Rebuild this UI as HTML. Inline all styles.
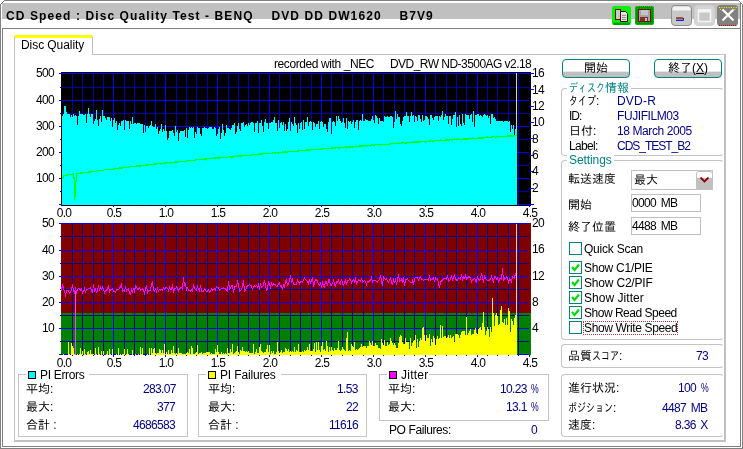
<!DOCTYPE html>
<html lang="ja"><head><meta charset="utf-8"><title>CD Speed : Disc Quality Test</title>
<style>
html,body{margin:0;padding:0;background:#fff;}
body{width:743px;height:449px;overflow:hidden;}
#win{position:relative;width:743px;height:449px;overflow:hidden;background:#fff;font-family:"Liberation Sans","IPAGothic","Noto Sans CJK JP",sans-serif;font-size:12px;line-height:14px;color:#000;}
.abs{position:absolute;}
.t{position:absolute;white-space:nowrap;line-height:14px;height:14px;will-change:transform;}
.b{position:absolute;box-sizing:border-box;}
.grp{position:absolute;box-sizing:border-box;border:1px solid #c4c4c4;}
.grp.r{border-radius:4px;border-right-color:transparent;}
.btn{position:absolute;box-sizing:border-box;border:1px solid #008080;border-radius:4px;background:linear-gradient(#fff 0,#fff 11px,#e8e8e8 11px,#e8e8e8 12px,#c0c0c0 12px);}
.edit{position:absolute;box-sizing:border-box;border:1px solid #c0c0c0;background:#fff;}
.cb{position:absolute;box-sizing:border-box;width:13px;height:13px;border:1px solid #008080;background:#fff;}
.k{display:inline-block;vertical-align:baseline;height:12px;}
.k>span{display:inline-block;transform-origin:0 50%;white-space:nowrap;letter-spacing:0;}

</style></head><body>
<div id="win">
<!-- window frame -->
<div class="b" style="left:0;top:0;width:743px;height:449px;border:1px solid #808080;"></div>
<div class="b" style="left:2px;top:3px;width:739px;height:16px;background:#c0c0c0;"></div>
<div class="b" style="left:2px;top:28px;width:739px;height:419px;border:1px solid #808080;"></div>
<svg class="abs" style="left:0;top:0" width="743" height="449" viewBox="0 0 743 449">
<path d="M0,0H5L0,5Z M743,0H738L743,5Z" fill="#fff"/>
<path d="M0,5L5,0 M738,0L743,5" stroke="#808080" stroke-width="1" fill="none"/>
</svg>
<div class="b" style="left:740px;top:3px;width:1px;height:26px;background:#808080;"></div>
<!-- tab pane -->
<div class="b" style="left:14px;top:54px;width:712px;height:388px;border:1px solid #c0c0c0;border-right-width:2px;border-bottom-width:2px;"></div>
<div class="b" style="left:14px;top:35px;width:79px;height:20px;background:#fff;border:1px solid #c0c0c0;border-bottom:none;border-top:3px solid #ffff00;border-radius:2px 2px 0 0;"></div>
<!-- title icons -->
<svg class="abs" style="left:606px;top:0" width="137" height="28" viewBox="606 0 137 28">
<rect x="612" y="6" width="19" height="19" rx="2.5" fill="#00f400"/>
<path d="M613,22.5h17v1a1.5,1.5 0 0 1 -1.5,1.5h-14a1.5,1.5 0 0 1 -1.5,-1.5z" fill="#00a000"/>
<rect x="615.5" y="9.5" width="5" height="10" fill="#c8c8c8" stroke="#800000"/>
<path d="M620.5,11.5h5l2,2v8h-7z" fill="#e4e4e4" stroke="#400000"/>
<path d="M622,15.5h4M622,17.5h4M622,19.5h4" stroke="#909090"/>
<rect x="635" y="6" width="19" height="19" rx="2.5" fill="#009000"/>
<rect x="635.5" y="6.5" width="18" height="18" rx="2.5" fill="none" stroke="#00e000" stroke-dasharray="1 1"/>
<path d="M637,8.5h15M637,22.5h15" stroke="#00c000" stroke-dasharray="1 2"/>
<rect x="638.5" y="9.5" width="12" height="12" fill="#a4a4a4" stroke="#701010"/>
<rect x="641" y="10" width="7" height="5" fill="#c4c4c4"/>
<rect x="640" y="17" width="8" height="4" fill="#803030"/>
<rect x="645" y="18" width="2" height="3" fill="#c0c0c0"/>
<rect x="671.5" y="5.5" width="20" height="20" rx="3.5" fill="#c8c8c8" stroke="#909090"/>
<path d="M672.5,10.5v-2a2,2 0 0 1 2,-2h14a2,2 0 0 1 2,2v2z" fill="#f4f4f4"/>
<rect x="676" y="17.5" width="7" height="3" fill="#909090"/><path d="M676,18h7" stroke="#900000"/><path d="M676,20.5h7.5v-2.5" stroke="#2020c0" fill="none"/>
<rect x="694.5" y="5.5" width="20" height="20" rx="3.5" fill="#d4d4d4" stroke="#d0d0d0"/>
<rect x="698.5" y="10" width="12" height="11.5" fill="#c8c8c8" stroke="#f4f4f4" stroke-width="1.6"/>
<rect x="698" y="9.5" width="13" height="3" fill="#f4f4f4"/>
<rect x="717" y="5" width="21" height="21" rx="3.5" fill="#808080"/>
<path d="M723.2,10.2L733.2,20.7M733.2,10.2L723.2,20.7" stroke="#900000" stroke-width="1"/>
<path d="M722.5,9.5L733.5,20.5M733.5,9.5L722.5,20.5" stroke="#fff" stroke-width="2.2"/>
<path d="M719,7.5h18M720,9.5h4M732,9.5h4" stroke="#ffee00" stroke-dasharray="1 1.4"/>
<path d="M719,25.5h17" stroke="#c00000" stroke-dasharray="1 1"/>
</svg>
<!-- buttons -->
<div class="btn" style="left:562px;top:59px;width:68px;height:19px;"></div>
<div class="btn" style="left:654px;top:59px;width:68px;height:19px;"></div>
<!-- groups right -->
<div class="grp r" style="left:561px;top:88px;width:163px;height:68px;"></div>
<div class="grp r" style="left:561px;top:160px;width:163px;height:180px;"></div>
<div class="grp r" style="left:561px;top:344px;width:163px;height:24px;"></div>
<div class="grp r" style="left:561px;top:374px;width:163px;height:63px;"></div>
<!-- combobox + edits -->
<div class="edit" style="left:631px;top:170px;width:82px;height:20px;"></div>
<div class="b" style="left:696px;top:171px;width:17px;height:18px;border:1px solid #c0c0c0;border-radius:3px 3px 0 0;background:linear-gradient(#fff 0,#fff 6px,#c0c0c0 6px);"></div>
<svg class="abs" style="left:696px;top:171px" width="17" height="18" viewBox="0 0 17 18"><path d="M4.5,6.5L8.5,10.5L12.5,6.5" stroke="#900000" stroke-width="1.8" fill="none"/></svg>
<div class="edit" style="left:631px;top:194px;width:70px;height:18px;"></div>
<div class="edit" style="left:631px;top:217px;width:70px;height:18px;"></div>
<!-- checkboxes -->
<div class="cb" style="left:569px;top:242px;"></div>
<div class="cb" style="left:569px;top:261px;"></div>
<div class="cb" style="left:569px;top:276px;"></div>
<div class="cb" style="left:569px;top:291px;"></div>
<div class="cb" style="left:569px;top:306px;"></div>
<div class="cb" style="left:569px;top:321px;"></div>
<svg class="abs" style="left:569px;top:261px" width="13" height="60" viewBox="0 0 13 60"><g stroke="#00dc00" stroke-width="2.2" fill="none"><path id="ck" d="M3,6L5.5,9L10,3.5"/><path d="M3,21L5.5,24L10,18.5"/><path d="M3,36L5.5,39L10,33.5"/><path d="M3,51L5.5,54L10,48.5"/></g></svg>
<div class="b" style="left:583px;top:321px;width:95px;height:14px;border:1px dotted #a04040;"></div>
<!-- bottom groups -->
<div class="grp" style="left:18px;top:374px;width:170px;height:63px;"></div>
<div class="grp" style="left:198px;top:374px;width:169px;height:63px;"></div>
<div class="grp" style="left:379px;top:374px;width:170px;height:47px;"></div>
<div class="b" style="left:28px;top:371px;width:8px;height:8px;background:#00ffff;border:1px solid #000;z-index:3;"></div>
<div class="b" style="left:208px;top:371px;width:8px;height:8px;background:#ffff00;border:1px solid #000;z-index:3;"></div>
<div class="b" style="left:389px;top:371px;width:8px;height:8px;background:#ff00ff;border:1px solid #000;z-index:3;"></div>

<svg class="abs" style="left:0;top:0" width="743" height="449" viewBox="0 0 743 449" shape-rendering="crispEdges"><rect x="61" y="72" width="470" height="134" fill="#000"/><rect x="72" y="73" width="1" height="131" fill="#0000a8"/><rect x="72" y="205" width="1" height="1" fill="#0000a8"/><rect x="82" y="73" width="1" height="131" fill="#0000a8"/><rect x="82" y="205" width="1" height="1" fill="#0000a8"/><rect x="93" y="73" width="1" height="131" fill="#0000a8"/><rect x="93" y="205" width="1" height="1" fill="#0000a8"/><rect x="103" y="73" width="1" height="131" fill="#0000a8"/><rect x="103" y="205" width="1" height="1" fill="#0000a8"/><rect x="113" y="73" width="1" height="131" fill="#0000ff"/><rect x="113" y="205" width="1" height="2" fill="#0000ff"/><rect x="124" y="73" width="1" height="131" fill="#0000a8"/><rect x="124" y="205" width="1" height="1" fill="#0000a8"/><rect x="134" y="73" width="1" height="131" fill="#0000a8"/><rect x="134" y="205" width="1" height="1" fill="#0000a8"/><rect x="145" y="73" width="1" height="131" fill="#0000a8"/><rect x="145" y="205" width="1" height="1" fill="#0000a8"/><rect x="155" y="73" width="1" height="131" fill="#0000a8"/><rect x="155" y="205" width="1" height="1" fill="#0000a8"/><rect x="165" y="73" width="1" height="131" fill="#0000ff"/><rect x="165" y="205" width="1" height="2" fill="#0000ff"/><rect x="176" y="73" width="1" height="131" fill="#0000a8"/><rect x="176" y="205" width="1" height="1" fill="#0000a8"/><rect x="186" y="73" width="1" height="131" fill="#0000a8"/><rect x="186" y="205" width="1" height="1" fill="#0000a8"/><rect x="196" y="73" width="1" height="131" fill="#0000a8"/><rect x="196" y="205" width="1" height="1" fill="#0000a8"/><rect x="207" y="73" width="1" height="131" fill="#0000a8"/><rect x="207" y="205" width="1" height="1" fill="#0000a8"/><rect x="217" y="73" width="1" height="131" fill="#0000ff"/><rect x="217" y="205" width="1" height="2" fill="#0000ff"/><rect x="228" y="73" width="1" height="131" fill="#0000a8"/><rect x="228" y="205" width="1" height="1" fill="#0000a8"/><rect x="238" y="73" width="1" height="131" fill="#0000a8"/><rect x="238" y="205" width="1" height="1" fill="#0000a8"/><rect x="248" y="73" width="1" height="131" fill="#0000a8"/><rect x="248" y="205" width="1" height="1" fill="#0000a8"/><rect x="259" y="73" width="1" height="131" fill="#0000a8"/><rect x="259" y="205" width="1" height="1" fill="#0000a8"/><rect x="269" y="73" width="1" height="131" fill="#0000ff"/><rect x="269" y="205" width="1" height="2" fill="#0000ff"/><rect x="279" y="73" width="1" height="131" fill="#0000a8"/><rect x="279" y="205" width="1" height="1" fill="#0000a8"/><rect x="290" y="73" width="1" height="131" fill="#0000a8"/><rect x="290" y="205" width="1" height="1" fill="#0000a8"/><rect x="300" y="73" width="1" height="131" fill="#0000a8"/><rect x="300" y="205" width="1" height="1" fill="#0000a8"/><rect x="311" y="73" width="1" height="131" fill="#0000a8"/><rect x="311" y="205" width="1" height="1" fill="#0000a8"/><rect x="321" y="73" width="1" height="131" fill="#0000ff"/><rect x="321" y="205" width="1" height="2" fill="#0000ff"/><rect x="331" y="73" width="1" height="131" fill="#0000a8"/><rect x="331" y="205" width="1" height="1" fill="#0000a8"/><rect x="342" y="73" width="1" height="131" fill="#0000a8"/><rect x="342" y="205" width="1" height="1" fill="#0000a8"/><rect x="352" y="73" width="1" height="131" fill="#0000a8"/><rect x="352" y="205" width="1" height="1" fill="#0000a8"/><rect x="363" y="73" width="1" height="131" fill="#0000a8"/><rect x="363" y="205" width="1" height="1" fill="#0000a8"/><rect x="373" y="73" width="1" height="131" fill="#0000ff"/><rect x="373" y="205" width="1" height="2" fill="#0000ff"/><rect x="383" y="73" width="1" height="131" fill="#0000a8"/><rect x="383" y="205" width="1" height="1" fill="#0000a8"/><rect x="394" y="73" width="1" height="131" fill="#0000a8"/><rect x="394" y="205" width="1" height="1" fill="#0000a8"/><rect x="404" y="73" width="1" height="131" fill="#0000a8"/><rect x="404" y="205" width="1" height="1" fill="#0000a8"/><rect x="414" y="73" width="1" height="131" fill="#0000a8"/><rect x="414" y="205" width="1" height="1" fill="#0000a8"/><rect x="425" y="73" width="1" height="131" fill="#0000ff"/><rect x="425" y="205" width="1" height="2" fill="#0000ff"/><rect x="435" y="73" width="1" height="131" fill="#0000a8"/><rect x="435" y="205" width="1" height="1" fill="#0000a8"/><rect x="446" y="73" width="1" height="131" fill="#0000a8"/><rect x="446" y="205" width="1" height="1" fill="#0000a8"/><rect x="456" y="73" width="1" height="131" fill="#0000a8"/><rect x="456" y="205" width="1" height="1" fill="#0000a8"/><rect x="466" y="73" width="1" height="131" fill="#0000a8"/><rect x="466" y="205" width="1" height="1" fill="#0000a8"/><rect x="477" y="73" width="1" height="131" fill="#0000ff"/><rect x="477" y="205" width="1" height="2" fill="#0000ff"/><rect x="487" y="73" width="1" height="131" fill="#0000a8"/><rect x="487" y="205" width="1" height="1" fill="#0000a8"/><rect x="497" y="73" width="1" height="131" fill="#0000a8"/><rect x="497" y="205" width="1" height="1" fill="#0000a8"/><rect x="508" y="73" width="1" height="131" fill="#0000a8"/><rect x="508" y="205" width="1" height="1" fill="#0000a8"/><rect x="518" y="73" width="1" height="131" fill="#0000a8"/><rect x="518" y="205" width="1" height="1" fill="#0000a8"/><rect x="529" y="205" width="1" height="2" fill="#0000ff"/><rect x="59" y="73" width="470" height="1" fill="#0000ff"/><rect x="60" y="87" width="469" height="1" fill="#0000a8"/><rect x="59" y="100" width="470" height="1" fill="#0000ff"/><rect x="60" y="113" width="469" height="1" fill="#0000a8"/><rect x="59" y="126" width="470" height="1" fill="#0000ff"/><rect x="60" y="139" width="469" height="1" fill="#0000a8"/><rect x="59" y="152" width="470" height="1" fill="#0000ff"/><rect x="60" y="165" width="469" height="1" fill="#0000a8"/><rect x="59" y="178" width="470" height="1" fill="#0000ff"/><rect x="60" y="191" width="469" height="1" fill="#0000a8"/><rect x="59" y="204" width="470" height="1" fill="#0000ff"/><rect x="529" y="204" width="5" height="1" fill="#0000ff"/><rect x="529" y="196" width="2" height="1" fill="#0000a8"/><rect x="529" y="188" width="5" height="1" fill="#0000ff"/><rect x="529" y="179" width="2" height="1" fill="#0000a8"/><rect x="529" y="171" width="5" height="1" fill="#0000ff"/><rect x="529" y="163" width="2" height="1" fill="#0000a8"/><rect x="529" y="155" width="5" height="1" fill="#0000ff"/><rect x="529" y="147" width="2" height="1" fill="#0000a8"/><rect x="529" y="138" width="5" height="1" fill="#0000ff"/><rect x="529" y="130" width="2" height="1" fill="#0000a8"/><rect x="529" y="122" width="5" height="1" fill="#0000ff"/><rect x="529" y="114" width="2" height="1" fill="#0000a8"/><rect x="529" y="106" width="5" height="1" fill="#0000ff"/><rect x="529" y="98" width="2" height="1" fill="#0000a8"/><rect x="529" y="89" width="5" height="1" fill="#0000ff"/><rect x="529" y="81" width="2" height="1" fill="#0000a8"/><rect x="529" y="73" width="5" height="1" fill="#0000ff"/><rect x="516" y="73" width="1" height="131" fill="#d0d0d0"/><path d="M62,205V116H63V114H64V106H65V106H66V112H67V114H68V114H69V114H70V117H71V115H72V117H73V114H74V116H75V115H76V116H77V125H78V116H79V111H80V114H81V114H82V114H83V115H84V115H85V114H86V123H87V114H88V108H89V114H90V117H91V114H92V114H93V124H94V121H95V119H96V110H97V120H98V126H99V119H100V116H101V122H102V110H103V116H104V116H105V118H106V120H107V117H108V117H109V117H110V121H111V118H112V127H113V120H114V118H115V123H116V121H117V130H118V125H119V123H120V126H121V121H122V121H123V120H124V130H125V120H126V121H127V121H128V121H129V129H130V121H131V124H132V117H133V124H134V123H135V123H136V124H137V123H138V123H139V123H140V124H141V124H142V124H143V133H144V125H145V132H146V126H147V126H148V128H149V126H150V125H151V121H152V126H153V127H154V127H155V124H156V129H157V127H158V134H159V131H160V129H161V124H162V132H163V129H164V131H165V125H166V131H167V140H168V138H169V131H170V131H171V131H172V130H173V133H174V136H175V126H176V132H177V130H178V141H179V133H180V131H181V131H182V131H183V131H184V130H185V137H186V128H187V138H188V130H189V127H190V128H191V127H192V128H193V127H194V138H195V132H196V134H197V127H198V128H199V128H200V134H201V136H202V128H203V128H204V127H205V128H206V128H207V129H208V128H209V127H210V127H211V127H212V129H213V129H214V127H215V128H216V136H217V134H218V129H219V127H220V139H221V133H222V124H223V130H224V136H225V133H226V125H227V128H228V128H229V129H230V130H231V128H232V125H233V125H234V123H235V134H236V132H237V126H238V123H239V129H240V131H241V123H242V123H243V122H244V127H245V125H246V124H247V126H248V123H249V125H250V123H251V122H252V122H253V123H254V132H255V123H256V123H257V121H258V133H259V123H260V123H261V120H262V126H263V132H264V122H265V119H266V123H267V123H268V129H269V123H270V123H271V122H272V122H273V120H274V117H275V123H276V123H277V131H278V120H279V128H280V123H281V122H282V125H283V122H284V131H285V124H286V131H287V129H288V122H289V118H290V131H291V122H292V124H293V126H294V117H295V123H296V125H297V133H298V123H299V129H300V123H301V122H302V130H303V120H304V129H305V122H306V122H307V117H308V126H309V122H310V121H311V122H312V130H313V122H314V123H315V127H316V124H317V124H318V121H319V129H320V122H321V121H322V122H323V127H324V124H325V124H326V129H327V132H328V122H329V118H330V118H331V134H332V122H333V121H334V122H335V126H336V116H337V121H338V116H339V119H340V121H341V123H342V122H343V118H344V123H345V128H346V118H347V129H348V121H349V122H350V121H351V124H352V122H353V120H354V128H355V122H356V120H357V120H358V130H359V121H360V120H361V121H362V114H363V121H364V121H365V119H366V120H367V120H368V121H369V121H370V121H371V119H372V116H373V120H374V123H375V115H376V116H377V118H378V124H379V118H380V121H381V121H382V121H383V122H384V116H385V117H386V117H387V116H388V117H389V117H390V116H391V116H392V117H393V128H394V122H395V111H396V119H397V114H398V117H399V117H400V124H401V126H402V121H403V117H404V116H405V116H406V112H407V116H408V116H409V122H410V116H411V112H412V116H413V115H414V122H415V116H416V117H417V121H418V115H419V115H420V119H421V122H422V115H423V121H424V120H425V116H426V116H427V117H428V119H429V125H430V115H431V115H432V118H433V120H434V117H435V116H436V116H437V116H438V121H439V116H440V117H441V115H442V111H443V120H444V117H445V114H446V116H447V116H448V124H449V116H450V116H451V125H452V119H453V115H454V115H455V112H456V127H457V117H458V126H459V115H460V124H461V126H462V114H463V123H464V125H465V114H466V115H467V115H468V115H469V119H470V115H471V114H472V122H473V111H474V127H475V115H476V115H477V114H478V114H479V116H480V115H481V116H482V117H483V115H484V114H485V115H486V116H487V115H488V118H489V116H490V124H491V114H492V114H493V118H494V117H495V119H496V121H497V121H498V121H499V121H500V121H501V121H502V121H503V122H504V121H505V121H506V121H507V121H508V122H509V121H510V132H511V125H512V129H513V125H514V135H515V129H516V130H517V205Z" fill="#00ffff"/><polyline points="62.5,179.0 63.5,175.6 64.5,175.5 65.5,175.2 66.5,175.7 67.5,175.0 68.5,174.8 69.5,174.7 70.5,174.6 71.5,174.7 72.5,174.3 73.5,174.0 74.5,182 74.5,200 75.5,192 75.5,182 76.5,181 76.5,173.5 77.5,173.6 78.5,173.6 79.5,173.4 80.5,173.1 81.5,173.0 82.5,173.3 83.5,172.8 84.5,172.8 85.5,172.4 86.5,172.4 87.5,172.7 88.5,171.8 89.5,172.2 90.5,171.9 91.5,171.7 92.5,171.4 93.5,171.7 94.5,171.2 95.5,171.3 96.5,171.3 97.5,170.8 98.5,170.7 99.5,170.5 100.5,170.3 101.5,170.2 102.5,170.3 103.5,170.3 104.5,169.8 105.5,169.4 106.5,169.7 107.5,169.8 108.5,169.8 109.5,169.6 110.5,169.5 111.5,169.2 112.5,169.3 113.5,169.0 114.5,168.5 115.5,168.7 116.5,168.4 117.5,168.3 118.5,168.3 119.5,168.0 120.5,168.0 121.5,168.2 122.5,167.9 123.5,167.7 124.5,167.3 125.5,167.6 126.5,167.3 127.5,167.3 128.5,167.2 129.5,166.8 130.5,166.9 131.5,166.6 132.5,166.7 133.5,166.6 134.5,166.4 135.5,166.5 136.5,166.1 137.5,165.8 138.5,165.9 139.5,165.9 140.5,165.9 141.5,165.6 142.5,165.6 143.5,165.3 144.5,165.6 145.5,165.1 146.5,165.1 147.5,164.9 148.5,164.8 149.5,164.8 150.5,164.5 151.5,164.5 152.5,164.6 153.5,164.2 154.5,163.9 155.5,164.1 156.5,163.9 157.5,163.7 158.5,163.9 159.5,163.8 160.5,164.1 161.5,163.7 162.5,163.4 163.5,163.3 164.5,162.6 165.5,163.2 166.5,163.1 167.5,162.8 168.5,162.7 169.5,162.7 170.5,163.0 171.5,162.6 172.5,162.5 173.5,162.2 174.5,162.3 175.5,162.1 176.5,161.9 177.5,162.2 178.5,161.7 179.5,161.6 180.5,161.4 181.5,161.4 182.5,161.6 183.5,161.2 184.5,161.3 185.5,161.2 186.5,160.8 187.5,160.5 188.5,161.2 189.5,160.6 190.5,160.5 191.5,160.2 192.5,160.5 193.5,160.4 194.5,160.2 195.5,159.9 196.5,159.6 197.5,159.5 198.5,159.5 199.5,159.4 200.5,159.6 201.5,159.6 202.5,159.2 203.5,159.3 204.5,159.0 205.5,159.0 206.5,159.1 207.5,158.8 208.5,158.7 209.5,158.7 210.5,158.7 211.5,158.3 212.5,158.4 213.5,157.7 214.5,158.4 215.5,157.9 216.5,157.7 217.5,158.0 218.5,158.0 219.5,158.0 220.5,157.8 221.5,157.5 222.5,157.6 223.5,157.5 224.5,157.3 225.5,157.2 226.5,157.3 227.5,157.3 228.5,156.8 229.5,156.8 230.5,156.9 231.5,156.9 232.5,156.9 233.5,156.2 234.5,156.6 235.5,156.2 236.5,155.8 237.5,156.3 238.5,156.0 239.5,155.9 240.5,155.9 241.5,155.9 242.5,155.5 243.5,155.6 244.5,155.2 245.5,155.6 246.5,155.4 247.5,155.2 248.5,155.2 249.5,155.2 250.5,155.2 251.5,155.0 252.5,154.8 253.5,154.5 254.5,154.7 255.5,154.7 256.5,154.7 257.5,154.3 258.5,154.6 259.5,154.1 260.5,154.0 261.5,154.0 262.5,154.1 263.5,153.8 264.5,153.5 265.5,153.4 266.5,153.8 267.5,153.5 268.5,153.6 269.5,153.2 270.5,153.4 271.5,153.2 272.5,153.1 273.5,152.8 274.5,152.7 275.5,153.0 276.5,152.2 277.5,152.6 278.5,152.9 279.5,152.6 280.5,152.3 281.5,152.2 282.5,152.0 283.5,152.5 284.5,152.0 285.5,152.0 286.5,152.2 287.5,152.0 288.5,151.9 289.5,151.6 290.5,151.6 291.5,151.4 292.5,151.5 293.5,151.2 294.5,151.3 295.5,151.3 296.5,151.3 297.5,150.9 298.5,150.9 299.5,150.8 300.5,150.6 301.5,150.8 302.5,150.7 303.5,150.4 304.5,150.5 305.5,150.1 306.5,150.1 307.5,149.9 308.5,150.0 309.5,150.2 310.5,150.0 311.5,149.8 312.5,149.9 313.5,149.7 314.5,149.7 315.5,149.3 316.5,149.5 317.5,149.2 318.5,149.4 319.5,149.3 320.5,149.2 321.5,148.9 322.5,149.4 323.5,148.8 324.5,148.8 325.5,148.7 326.5,148.6 327.5,148.4 328.5,148.6 329.5,148.7 330.5,148.3 331.5,147.9 332.5,148.0 333.5,148.2 334.5,147.8 335.5,147.9 336.5,147.8 337.5,147.7 338.5,147.9 339.5,147.9 340.5,147.3 341.5,147.2 342.5,147.8 343.5,147.5 344.5,147.4 345.5,147.1 346.5,147.2 347.5,146.8 348.5,147.5 349.5,147.0 350.5,147.0 351.5,146.8 352.5,147.0 353.5,146.7 354.5,146.6 355.5,146.3 356.5,146.4 357.5,146.4 358.5,146.5 359.5,146.1 360.5,145.9 361.5,145.9 362.5,145.8 363.5,146.2 364.5,145.4 365.5,145.7 366.5,145.9 367.5,145.7 368.5,145.4 369.5,145.4 370.5,145.1 371.5,145.1 372.5,144.8 373.5,145.2 374.5,145.0 375.5,144.9 376.5,144.8 377.5,144.7 378.5,144.7 379.5,144.7 380.5,145.0 381.5,144.5 382.5,144.5 383.5,144.5 384.5,144.6 385.5,144.4 386.5,144.5 387.5,144.2 388.5,144.1 389.5,144.1 390.5,144.0 391.5,143.9 392.5,143.7 393.5,143.4 394.5,143.8 395.5,143.5 396.5,143.5 397.5,143.7 398.5,143.1 399.5,143.5 400.5,143.3 401.5,142.8 402.5,143.1 403.5,142.8 404.5,143.2 405.5,142.9 406.5,143.1 407.5,142.7 408.5,142.8 409.5,142.6 410.5,142.2 411.5,142.6 412.5,142.2 413.5,142.1 414.5,142.4 415.5,141.9 416.5,141.9 417.5,142.1 418.5,141.9 419.5,141.7 420.5,142.1 421.5,141.8 422.5,141.8 423.5,141.9 424.5,141.6 425.5,142.0 426.5,141.2 427.5,141.6 428.5,141.5 429.5,141.0 430.5,141.3 431.5,140.7 432.5,141.3 433.5,141.0 434.5,140.9 435.5,140.8 436.5,140.7 437.5,140.8 438.5,140.7 439.5,140.5 440.5,139.9 441.5,140.5 442.5,140.5 443.5,140.5 444.5,140.3 445.5,140.0 446.5,140.1 447.5,139.9 448.5,140.3 449.5,140.0 450.5,139.7 451.5,139.5 452.5,139.9 453.5,139.7 454.5,139.0 455.5,139.2 456.5,139.6 457.5,139.0 458.5,139.2 459.5,139.3 460.5,139.2 461.5,139.4 462.5,139.3 463.5,138.9 464.5,139.1 465.5,138.9 466.5,138.9 467.5,138.9 468.5,138.7 469.5,138.7 470.5,138.7 471.5,138.4 472.5,138.5 473.5,138.1 474.5,138.2 475.5,138.2 476.5,138.2 477.5,138.4 478.5,138.1 479.5,137.9 480.5,137.9 481.5,137.9 482.5,137.9 483.5,137.8 484.5,137.6 485.5,137.7 486.5,137.3 487.5,137.1 488.5,137.5 489.5,137.2 490.5,137.2 491.5,136.9 492.5,137.0 493.5,136.9 494.5,136.8 495.5,137.2 496.5,136.7 497.5,137.0 498.5,136.7 499.5,136.8 500.5,136.3 501.5,136.5 502.5,136.5 503.5,136.4 504.5,136.4 505.5,136.4 506.5,136.3 507.5,136.1 508.5,135.9 509.5,136.0 510.5,135.9 511.5,136.0 512.5,136.3 513.5,136.0 514.5,135.7 515.5,135.7 516.5,135.2" fill="none" stroke="#00ff00" stroke-width="1.2" shape-rendering="crispEdges"/><rect x="61" y="223" width="470" height="90" fill="#800000"/><rect x="61" y="313" width="470" height="42" fill="#008000"/><rect x="72" y="223" width="1" height="131" fill="#000090"/><rect x="72" y="355" width="1" height="1" fill="#000090"/><rect x="82" y="223" width="1" height="131" fill="#000090"/><rect x="82" y="355" width="1" height="1" fill="#000090"/><rect x="93" y="223" width="1" height="131" fill="#000090"/><rect x="93" y="355" width="1" height="1" fill="#000090"/><rect x="103" y="223" width="1" height="131" fill="#000090"/><rect x="103" y="355" width="1" height="1" fill="#000090"/><rect x="113" y="223" width="1" height="131" fill="#0000ff"/><rect x="113" y="355" width="1" height="2" fill="#0000ff"/><rect x="124" y="223" width="1" height="131" fill="#000090"/><rect x="124" y="355" width="1" height="1" fill="#000090"/><rect x="134" y="223" width="1" height="131" fill="#000090"/><rect x="134" y="355" width="1" height="1" fill="#000090"/><rect x="145" y="223" width="1" height="131" fill="#000090"/><rect x="145" y="355" width="1" height="1" fill="#000090"/><rect x="155" y="223" width="1" height="131" fill="#000090"/><rect x="155" y="355" width="1" height="1" fill="#000090"/><rect x="165" y="223" width="1" height="131" fill="#0000ff"/><rect x="165" y="355" width="1" height="2" fill="#0000ff"/><rect x="176" y="223" width="1" height="131" fill="#000090"/><rect x="176" y="355" width="1" height="1" fill="#000090"/><rect x="186" y="223" width="1" height="131" fill="#000090"/><rect x="186" y="355" width="1" height="1" fill="#000090"/><rect x="196" y="223" width="1" height="131" fill="#000090"/><rect x="196" y="355" width="1" height="1" fill="#000090"/><rect x="207" y="223" width="1" height="131" fill="#000090"/><rect x="207" y="355" width="1" height="1" fill="#000090"/><rect x="217" y="223" width="1" height="131" fill="#0000ff"/><rect x="217" y="355" width="1" height="2" fill="#0000ff"/><rect x="228" y="223" width="1" height="131" fill="#000090"/><rect x="228" y="355" width="1" height="1" fill="#000090"/><rect x="238" y="223" width="1" height="131" fill="#000090"/><rect x="238" y="355" width="1" height="1" fill="#000090"/><rect x="248" y="223" width="1" height="131" fill="#000090"/><rect x="248" y="355" width="1" height="1" fill="#000090"/><rect x="259" y="223" width="1" height="131" fill="#000090"/><rect x="259" y="355" width="1" height="1" fill="#000090"/><rect x="269" y="223" width="1" height="131" fill="#0000ff"/><rect x="269" y="355" width="1" height="2" fill="#0000ff"/><rect x="279" y="223" width="1" height="131" fill="#000090"/><rect x="279" y="355" width="1" height="1" fill="#000090"/><rect x="290" y="223" width="1" height="131" fill="#000090"/><rect x="290" y="355" width="1" height="1" fill="#000090"/><rect x="300" y="223" width="1" height="131" fill="#000090"/><rect x="300" y="355" width="1" height="1" fill="#000090"/><rect x="311" y="223" width="1" height="131" fill="#000090"/><rect x="311" y="355" width="1" height="1" fill="#000090"/><rect x="321" y="223" width="1" height="131" fill="#0000ff"/><rect x="321" y="355" width="1" height="2" fill="#0000ff"/><rect x="331" y="223" width="1" height="131" fill="#000090"/><rect x="331" y="355" width="1" height="1" fill="#000090"/><rect x="342" y="223" width="1" height="131" fill="#000090"/><rect x="342" y="355" width="1" height="1" fill="#000090"/><rect x="352" y="223" width="1" height="131" fill="#000090"/><rect x="352" y="355" width="1" height="1" fill="#000090"/><rect x="363" y="223" width="1" height="131" fill="#000090"/><rect x="363" y="355" width="1" height="1" fill="#000090"/><rect x="373" y="223" width="1" height="131" fill="#0000ff"/><rect x="373" y="355" width="1" height="2" fill="#0000ff"/><rect x="383" y="223" width="1" height="131" fill="#000090"/><rect x="383" y="355" width="1" height="1" fill="#000090"/><rect x="394" y="223" width="1" height="131" fill="#000090"/><rect x="394" y="355" width="1" height="1" fill="#000090"/><rect x="404" y="223" width="1" height="131" fill="#000090"/><rect x="404" y="355" width="1" height="1" fill="#000090"/><rect x="414" y="223" width="1" height="131" fill="#000090"/><rect x="414" y="355" width="1" height="1" fill="#000090"/><rect x="425" y="223" width="1" height="131" fill="#0000ff"/><rect x="425" y="355" width="1" height="2" fill="#0000ff"/><rect x="435" y="223" width="1" height="131" fill="#000090"/><rect x="435" y="355" width="1" height="1" fill="#000090"/><rect x="446" y="223" width="1" height="131" fill="#000090"/><rect x="446" y="355" width="1" height="1" fill="#000090"/><rect x="456" y="223" width="1" height="131" fill="#000090"/><rect x="456" y="355" width="1" height="1" fill="#000090"/><rect x="466" y="223" width="1" height="131" fill="#000090"/><rect x="466" y="355" width="1" height="1" fill="#000090"/><rect x="477" y="223" width="1" height="131" fill="#0000ff"/><rect x="477" y="355" width="1" height="2" fill="#0000ff"/><rect x="487" y="223" width="1" height="131" fill="#000090"/><rect x="487" y="355" width="1" height="1" fill="#000090"/><rect x="497" y="223" width="1" height="131" fill="#000090"/><rect x="497" y="355" width="1" height="1" fill="#000090"/><rect x="508" y="223" width="1" height="131" fill="#000090"/><rect x="508" y="355" width="1" height="1" fill="#000090"/><rect x="518" y="223" width="1" height="131" fill="#000090"/><rect x="518" y="355" width="1" height="1" fill="#000090"/><rect x="529" y="355" width="1" height="2" fill="#0000ff"/><rect x="59" y="223" width="470" height="1" fill="#0000ff"/><rect x="60" y="236" width="469" height="1" fill="#000090"/><rect x="59" y="250" width="470" height="1" fill="#0000ff"/><rect x="60" y="263" width="469" height="1" fill="#000090"/><rect x="59" y="276" width="470" height="1" fill="#0000ff"/><rect x="60" y="289" width="469" height="1" fill="#000090"/><rect x="59" y="302" width="470" height="1" fill="#0000ff"/><rect x="60" y="315" width="469" height="1" fill="#000090"/><rect x="59" y="328" width="470" height="1" fill="#0000ff"/><rect x="60" y="341" width="469" height="1" fill="#000090"/><rect x="59" y="354" width="470" height="1" fill="#0000ff"/><rect x="516" y="224" width="1" height="130" fill="#d0d0d0"/><path d="M62,355V355H63V354H64V355H65V355H66V355H67V355H68V342H69V354H70V355H71V343H72V346H73V348H74V354H75V355H76V355H77V354H78V355H79V354H80V348H81V354H82V351H83V355H84V349H85V354H86V355H87V352H88V351H89V354H90V350H91V354H92V354H93V354H94V355H95V348H96V354H97V355H98V347H99V354H100V355H101V351H102V355H103V351H104V355H105V355H106V354H107V351H108V355H109V349H110V354H111V355H112V349H113V355H114V355H115V355H116V354H117V355H118V348H119V355H120V354H121V355H122V354H123V354H124V349H125V355H126V354H127V349H128V354H129V355H130V355H131V355H132V350H133V355H134V355H135V354H136V355H137V355H138V354H139V355H140V347H141V354H142V348H143V355H144V355H145V355H146V355H147V354H148V355H149V348H150V355H151V348H152V353H153V349H154V348H155V353H156V354H157V353H158V353H159V349H160V350H161V353H162V350H163V353H164V344H165V354H166V352H167V354H168V350H169V354H170V354H171V350H172V353H173V346H174V353H175V354H176V353H177V354H178V348H179V353H180V353H181V353H182V354H183V354H184V354H185V354H186V353H187V352H188V353H189V349H190V354H191V346H192V348H193V354H194V354H195V353H196V352H197V345H198V354H199V353H200V353H201V352H202V354H203V353H204V353H205V353H206V352H207V352H208V352H209V352H210V354H211V353H212V354H213V354H214V354H215V349H216V352H217V345H218V352H219V354H220V354H221V352H222V354H223V353H224V354H225V353H226V354H227V348H228V353H229V353H230V349H231V352H232V344H233V354H234V353H235V352H236V351H237V346H238V352H239V354H240V350H241V351H242V347H243V351H244V351H245V352H246V351H247V352H248V351H249V353H250V353H251V353H252V353H253V344H254V354H255V352H256V349H257V353H258V353H259V347H260V344H261V351H262V352H263V353H264V352H265V352H266V349H267V345H268V352H269V345H270V354H271V351H272V353H273V351H274V354H275V354H276V352H277V342H278V351H279V353H280V352H281V350H282V353H283V352H284V352H285V348H286V349H287V351H288V349H289V352H290V351H291V352H292V351H293V352H294V347H295V352H296V350H297V351H298V344H299V352H300V352H301V352H302V351H303V352H304V350H305V351H306V350H307V347H308V350H309V344H310V351H311V351H312V351H313V349H314V343H315V352H316V342H317V350H318V342H319V350H320V352H321V346H322V342H323V350H324V349H325V351H326V341H327V346H328V352H329V347H330V351H331V347H332V350H333V351H334V348H335V350H336V350H337V348H338V341H339V350H340V351H341V350H342V347H343V349H344V350H345V351H346V338H347V332H348V351H349V350H350V351H351V344H352V346H353V347H354V342H355V350H356V349H357V350H358V349H359V348H360V347H361V344H362V347H363V346H364V346H365V346H366V348H367V346H368V346H369V341H370V343H371V345H372V341H373V346H374V346H375V343H376V345H377V345H378V348H379V348H380V349H381V339H382V343H383V345H384V340H385V346H386V346H387V342H388V345H389V344H390V338H391V341H392V343H393V345H394V343H395V345H396V348H397V348H398V343H399V337H400V335H401V336H402V342H403V344H404V344H405V338H406V342H407V342H408V342H409V349H410V338H411V346H412V343H413V341H414V340H415V335H416V348H417V339H418V347H419V341H420V338H421V340H422V328H423V327H424V335H425V341H426V335H427V338H428V338H429V334H430V346H431V339H432V342H433V336H434V338H435V345H436V339H437V336H438V339H439V338H440V325H441V338H442V326H443V337H444V336H445V336H446V338H447V337H448V335H449V338H450V335H451V338H452V337H453V336H454V342H455V334H456V334H457V334H458V335H459V338H460V335H461V332H462V331H463V331H464V331H465V335H466V317H467V335H468V333H469V331H470V329H471V335H472V334H473V334H474V330H475V328H476V333H477V334H478V329H479V328H480V327H481V330H482V323H483V312H484V327H485V335H486V331H487V327H488V329H489V337H490V327H491V332H492V298H493V313H494V326H495V315H496V313H497V316H498V325H499V324H500V310H501V306H502V322H503V323H504V319H505V325H506V318H507V325H508V308H509V311H510V332H511V319H512V321H513V325H514V318H515V315H516V322H517V355Z" fill="#ffff00"/><path d="M61.5,291.3 L62.5,284.0 L63.5,287.9 L64.5,291.5 L65.5,294.9 L66.5,290.8 L67.5,290.7 L68.5,290.1 L69.5,293.5 L70.5,292.7 L71.5,288.7 L72.5,285.7 L73.5,290.7 L74.5,293.5 L75.5,287.0 L76.5,292.2 L77.5,289.5 L78.5,288.1 L79.5,288.5 L80.5,290.4 L81.5,289.0 L82.5,292.9 L83.5,291.4 L84.5,288.6 L85.5,293.1 L86.5,289.5 L87.5,289.9 L88.5,288.4 L89.5,288.5 L90.5,287.7 L91.5,290.4 L92.5,293.0 L93.5,284.3 L94.5,292.3 L95.5,289.8 L96.5,292.4 L97.5,291.1 L98.5,284.9 L99.5,291.4 L100.5,286.8 L101.5,289.2 L102.5,286.9 L103.5,289.9 L104.5,292.7 L105.5,290.9 L106.5,289.8 L107.5,289.2 L108.5,285.5 L109.5,291.7 L110.5,289.5 L111.5,289.1 L112.5,288.6 L113.5,291.4 L114.5,291.8 L115.5,292.2 L116.5,289.7 L117.5,289.9 L118.5,289.1 L119.5,288.6 L120.5,286.7 L121.5,284.5 L122.5,291.5 L123.5,290.7 L124.5,291.1 L125.5,287.4 L126.5,290.9 L127.5,289.7 L128.5,288.4 L129.5,293.1 L130.5,294.5 L131.5,289.3 L132.5,291.6 L133.5,289.0 L134.5,291.6 L135.5,285.7 L136.5,286.4 L137.5,289.0 L138.5,289.0 L139.5,288.0 L140.5,290.4 L141.5,289.2 L142.5,288.7 L143.5,290.5 L144.5,293.4 L145.5,288.9 L146.5,285.2 L147.5,292.9 L148.5,291.0 L149.5,290.2 L150.5,290.0 L151.5,284.3 L152.5,282.1 L153.5,290.3 L154.5,291.0 L155.5,288.8 L156.5,291.5 L157.5,288.6 L158.5,291.0 L159.5,289.6 L160.5,290.0 L161.5,289.6 L162.5,290.5 L163.5,288.1 L164.5,289.5 L165.5,287.7 L166.5,287.8 L167.5,288.1 L168.5,290.6 L169.5,287.4 L170.5,289.2 L171.5,289.7 L172.5,284.0 L173.5,293.1 L174.5,288.6 L175.5,288.5 L176.5,287.1 L177.5,287.8 L178.5,291.0 L179.5,289.3 L180.5,287.9 L181.5,287.5 L182.5,289.0 L183.5,277.1 L184.5,286.2 L185.5,282.8 L186.5,291.2 L187.5,286.7 L188.5,290.8 L189.5,290.5 L190.5,291.3 L191.5,289.9 L192.5,291.4 L193.5,284.2 L194.5,288.3 L195.5,289.7 L196.5,290.2 L197.5,286.5 L198.5,288.9 L199.5,290.6 L200.5,284.7 L201.5,291.8 L202.5,291.9 L203.5,290.9 L204.5,288.9 L205.5,290.2 L206.5,291.5 L207.5,291.3 L208.5,289.7 L209.5,292.4 L210.5,291.8 L211.5,289.0 L212.5,290.3 L213.5,289.8 L214.5,289.1 L215.5,290.2 L216.5,286.3 L217.5,287.3 L218.5,287.2 L219.5,290.3 L220.5,289.1 L221.5,288.7 L222.5,288.3 L223.5,287.7 L224.5,289.0 L225.5,288.9 L226.5,289.9 L227.5,290.9 L228.5,281.0 L229.5,288.9 L230.5,288.0 L231.5,285.5 L232.5,285.6 L233.5,293.2 L234.5,286.4 L235.5,286.5 L236.5,286.2 L237.5,281.6 L238.5,284.9 L239.5,291.5 L240.5,290.5 L241.5,289.1 L242.5,286.7 L243.5,280.4 L244.5,291.3 L245.5,290.6 L246.5,287.0 L247.5,285.8 L248.5,285.6 L249.5,284.7 L250.5,285.2 L251.5,285.7 L252.5,289.4 L253.5,287.4 L254.5,285.8 L255.5,286.4 L256.5,285.4 L257.5,287.3 L258.5,284.8 L259.5,288.0 L260.5,284.6 L261.5,287.3 L262.5,286.8 L263.5,284.8 L264.5,280.1 L265.5,285.2 L266.5,290.3 L267.5,288.6 L268.5,281.1 L269.5,284.7 L270.5,287.6 L271.5,282.8 L272.5,284.9 L273.5,283.8 L274.5,284.5 L275.5,284.7 L276.5,286.5 L277.5,286.0 L278.5,283.5 L279.5,283.0 L280.5,286.7 L281.5,285.7 L282.5,290.2 L283.5,284.0 L284.5,288.2 L285.5,281.1 L286.5,279.7 L287.5,285.2 L288.5,283.6 L289.5,279.7 L290.5,276.7 L291.5,281.4 L292.5,278.4 L293.5,284.4 L294.5,284.4 L295.5,284.5 L296.5,284.2 L297.5,280.1 L298.5,281.4 L299.5,283.6 L300.5,281.8 L301.5,281.7 L302.5,282.0 L303.5,280.2 L304.5,278.0 L305.5,279.8 L306.5,280.2 L307.5,281.4 L308.5,283.8 L309.5,278.6 L310.5,284.3 L311.5,280.1 L312.5,278.0 L313.5,286.6 L314.5,283.1 L315.5,279.3 L316.5,279.9 L317.5,281.2 L318.5,284.5 L319.5,285.4 L320.5,281.8 L321.5,287.5 L322.5,282.7 L323.5,285.6 L324.5,287.2 L325.5,281.9 L326.5,281.9 L327.5,286.2 L328.5,279.7 L329.5,280.0 L330.5,285.7 L331.5,285.1 L332.5,283.3 L333.5,280.2 L334.5,284.0 L335.5,287.1 L336.5,281.9 L337.5,282.3 L338.5,280.3 L339.5,282.8 L340.5,283.9 L341.5,278.8 L342.5,282.6 L343.5,286.3 L344.5,281.8 L345.5,280.2 L346.5,284.8 L347.5,280.4 L348.5,280.6 L349.5,278.8 L350.5,279.1 L351.5,282.9 L352.5,280.7 L353.5,279.6 L354.5,282.0 L355.5,279.0 L356.5,283.8 L357.5,282.0 L358.5,279.5 L359.5,280.6 L360.5,281.7 L361.5,277.7 L362.5,282.6 L363.5,281.5 L364.5,280.4 L365.5,281.4 L366.5,284.5 L367.5,281.3 L368.5,282.2 L369.5,280.7 L370.5,280.3 L371.5,277.8 L372.5,281.8 L373.5,280.5 L374.5,280.5 L375.5,280.5 L376.5,281.1 L377.5,282.3 L378.5,280.3 L379.5,279.8 L380.5,275.4 L381.5,281.2 L382.5,286.0 L383.5,277.2 L384.5,278.7 L385.5,279.3 L386.5,278.9 L387.5,281.7 L388.5,282.3 L389.5,279.8 L390.5,277.7 L391.5,282.9 L392.5,284.5 L393.5,279.6 L394.5,282.1 L395.5,279.7 L396.5,283.3 L397.5,280.2 L398.5,273.6 L399.5,281.4 L400.5,280.7 L401.5,279.1 L402.5,281.8 L403.5,277.2 L404.5,286.3 L405.5,279.8 L406.5,279.8 L407.5,279.1 L408.5,280.6 L409.5,281.1 L410.5,282.5 L411.5,282.7 L412.5,280.6 L413.5,284.5 L414.5,278.6 L415.5,277.9 L416.5,277.3 L417.5,277.6 L418.5,280.1 L419.5,278.4 L420.5,276.9 L421.5,279.8 L422.5,279.9 L423.5,280.2 L424.5,279.6 L425.5,279.7 L426.5,279.1 L427.5,279.1 L428.5,280.3 L429.5,276.5 L430.5,280.2 L431.5,279.7 L432.5,279.3 L433.5,278.1 L434.5,282.2 L435.5,277.7 L436.5,279.8 L437.5,279.1 L438.5,282.6 L439.5,288.4 L440.5,282.6 L441.5,280.4 L442.5,280.3 L443.5,278.7 L444.5,278.1 L445.5,278.7 L446.5,279.2 L447.5,275.5 L448.5,281.3 L449.5,280.4 L450.5,279.8 L451.5,275.2 L452.5,279.8 L453.5,277.3 L454.5,275.1 L455.5,278.1 L456.5,280.9 L457.5,280.5 L458.5,277.4 L459.5,278.7 L460.5,279.1 L461.5,274.5 L462.5,279.8 L463.5,277.1 L464.5,278.3 L465.5,275.8 L466.5,279.0 L467.5,278.6 L468.5,276.3 L469.5,277.1 L470.5,277.9 L471.5,281.8 L472.5,279.9 L473.5,279.4 L474.5,278.6 L475.5,280.0 L476.5,282.8 L477.5,276.0 L478.5,279.1 L479.5,280.2 L480.5,278.9 L481.5,273.6 L482.5,277.4 L483.5,282.7 L484.5,276.0 L485.5,278.4 L486.5,279.5 L487.5,280.2 L488.5,280.2 L489.5,280.0 L490.5,279.8 L491.5,276.5 L492.5,279.7 L493.5,281.6 L494.5,276.9 L495.5,276.2 L496.5,279.4 L497.5,277.8 L498.5,282.8 L499.5,279.0 L500.5,278.2 L501.5,279.5 L502.5,268.1 L503.5,281.4 L504.5,278.1 L505.5,278.8 L506.5,276.5 L507.5,277.8 L508.5,282.1 L509.5,278.9 L510.5,279.8 L511.5,281.6 L512.5,277.0 L513.5,277.9 L514.5,278.2 L515.5,273.1" fill="none" stroke="#ff00ff" stroke-width="1" shape-rendering="crispEdges"/><rect x="75" y="291" width="1" height="64" fill="#ff40ff"/></svg>
<div class="t" style="top:66.14px;letter-spacing:-0.670px;right:689.17px;">500</div>
<div class="t" style="top:93.14px;letter-spacing:-0.670px;right:689.17px;">400</div>
<div class="t" style="top:119.14px;letter-spacing:-0.670px;right:689.17px;">300</div>
<div class="t" style="top:145.14px;letter-spacing:-0.670px;right:689.17px;">200</div>
<div class="t" style="top:171.14px;letter-spacing:-0.670px;right:689.17px;">100</div>
<div class="t" style="top:216.14px;letter-spacing:-0.670px;right:689.17px;">50</div>
<div class="t" style="top:243.14px;letter-spacing:-0.670px;right:689.17px;">40</div>
<div class="t" style="top:269.14px;letter-spacing:-0.670px;right:689.17px;">30</div>
<div class="t" style="top:295.14px;letter-spacing:-0.670px;right:689.17px;">20</div>
<div class="t" style="top:321.14px;letter-spacing:-0.670px;right:689.17px;">10</div>
<div class="t" style="top:180.77px;letter-spacing:-0.670px;left:532.2px;">2</div>
<div class="t" style="top:164.39px;letter-spacing:-0.670px;left:532.2px;">4</div>
<div class="t" style="top:148.02px;letter-spacing:-0.670px;left:532.2px;">6</div>
<div class="t" style="top:131.64px;letter-spacing:-0.670px;left:532.2px;">8</div>
<div class="t" style="top:115.27px;letter-spacing:-0.670px;left:532.2px;">10</div>
<div class="t" style="top:98.89px;letter-spacing:-0.670px;left:532.2px;">12</div>
<div class="t" style="top:82.52px;letter-spacing:-0.670px;left:532.2px;">14</div>
<div class="t" style="top:66.14px;letter-spacing:-0.670px;left:532.2px;">16</div>
<div class="t" style="top:216.14px;letter-spacing:-0.670px;left:532.2px;">20</div>
<div class="t" style="top:242.14px;letter-spacing:-0.670px;left:532.2px;">16</div>
<div class="t" style="top:269.14px;letter-spacing:-0.670px;left:532.2px;">12</div>
<div class="t" style="top:295.14px;letter-spacing:-0.670px;left:532.2px;">8</div>
<div class="t" style="top:321.14px;letter-spacing:-0.670px;left:532.2px;">4</div>
<div class="t" style="top:205.64px;letter-spacing:-0.670px;left:-86.5px;width:300px;text-align:center;">0.0</div>
<div class="t" style="top:356.14px;letter-spacing:-0.670px;left:-86.5px;width:300px;text-align:center;">0.0</div>
<div class="t" style="top:205.64px;letter-spacing:-0.670px;left:-36px;width:300px;text-align:center;">0.5</div>
<div class="t" style="top:356.14px;letter-spacing:-0.670px;left:-36px;width:300px;text-align:center;">0.5</div>
<div class="t" style="top:205.64px;letter-spacing:-0.670px;left:16px;width:300px;text-align:center;">1.0</div>
<div class="t" style="top:356.14px;letter-spacing:-0.670px;left:16px;width:300px;text-align:center;">1.0</div>
<div class="t" style="top:205.64px;letter-spacing:-0.670px;left:68px;width:300px;text-align:center;">1.5</div>
<div class="t" style="top:356.14px;letter-spacing:-0.670px;left:68px;width:300px;text-align:center;">1.5</div>
<div class="t" style="top:205.64px;letter-spacing:-0.670px;left:120px;width:300px;text-align:center;">2.0</div>
<div class="t" style="top:356.14px;letter-spacing:-0.670px;left:120px;width:300px;text-align:center;">2.0</div>
<div class="t" style="top:205.64px;letter-spacing:-0.670px;left:172px;width:300px;text-align:center;">2.5</div>
<div class="t" style="top:356.14px;letter-spacing:-0.670px;left:172px;width:300px;text-align:center;">2.5</div>
<div class="t" style="top:205.64px;letter-spacing:-0.670px;left:224px;width:300px;text-align:center;">3.0</div>
<div class="t" style="top:356.14px;letter-spacing:-0.670px;left:224px;width:300px;text-align:center;">3.0</div>
<div class="t" style="top:205.64px;letter-spacing:-0.670px;left:276px;width:300px;text-align:center;">3.5</div>
<div class="t" style="top:356.14px;letter-spacing:-0.670px;left:276px;width:300px;text-align:center;">3.5</div>
<div class="t" style="top:205.64px;letter-spacing:-0.670px;left:328px;width:300px;text-align:center;">4.0</div>
<div class="t" style="top:356.14px;letter-spacing:-0.670px;left:328px;width:300px;text-align:center;">4.0</div>
<div class="t" style="top:205.64px;letter-spacing:-0.670px;left:380px;width:300px;text-align:center;">4.5</div>
<div class="t" style="top:356.14px;letter-spacing:-0.670px;left:380px;width:300px;text-align:center;">4.5</div>
<div class="t" style="top:57.44px;letter-spacing:-0.405px;left:273.5px;">recorded with _NEC</div>
<div class="t" style="top:57.44px;letter-spacing:-0.542px;left:390.2px;">DVD_RW ND-3500AG v2.18</div>
<div class="t" style="top:9.44px;letter-spacing:1.100px;font-weight:bold;left:6.2px;white-space:pre;">CD Speed : Disc Quality Test - BENQ    DVD DD DW1620    B7V9</div>
<div class="t" style="top:37.84px;letter-spacing:-0.065px;left:20.9px;">Disc Quality</div>
<div class="t" style="top:60.64px;left:445.5px;width:300px;text-align:center;">開始</div>
<div class="t" style="top:60.64px;left:537.5px;width:300px;text-align:center;">終了(<u>X</u>)</div>
<div class="t" style="top:80.84px;color:#008080;left:568.7px;background:#fff;padding:0 2px;margin-left:-2px;"><span class="k" style="width:36.0px"><span style="transform:scaleX(0.75)">ディスク</span></span>情報</div>
<div class="t" style="top:93.74px;left:568.7px;"><span class="k" style="width:27.0px"><span style="transform:scaleX(0.75)">タイプ</span></span>:</div>
<div class="t" style="top:93.74px;color:#000080;letter-spacing:0.200px;left:616.7px;">DVD-R</div>
<div class="t" style="top:108.84px;letter-spacing:-1.022px;left:568.7px;">ID:</div>
<div class="t" style="top:108.84px;color:#000080;letter-spacing:-0.413px;left:616.7px;">FUJIFILM03</div>
<div class="t" style="top:123.64px;left:568.7px;">日付:</div>
<div class="t" style="top:123.64px;color:#000080;letter-spacing:-0.397px;left:616.7px;">18 March 2005</div>
<div class="t" style="top:138.74px;letter-spacing:-0.681px;left:568.7px;">Label:</div>
<div class="t" style="top:138.74px;color:#000080;letter-spacing:-1.023px;left:616.7px;">CDS_TEST_B2</div>
<div class="t" style="top:153.34px;color:#008080;letter-spacing:-0.080px;left:569.2px;background:#fff;padding:0 2px;margin-left:-2px;">Settings</div>
<div class="t" style="top:171.74px;left:568.2px;">転送速度</div>
<div class="t" style="top:172.74px;left:634.2px;">最大</div>
<div class="t" style="top:198.14px;left:568.2px;">開始</div>
<div class="t" style="top:195.74px;letter-spacing:-0.670px;left:632.4px;word-spacing:2px;">0000 MB</div>
<div class="t" style="top:219.74px;left:568.2px;">終了位置</div>
<div class="t" style="top:218.74px;letter-spacing:-0.670px;left:632.4px;word-spacing:2px;">4488 MB</div>
<div class="t" style="top:241.64px;letter-spacing:-0.229px;left:583.7px;">Quick Scan</div>
<div class="t" style="top:260.84px;letter-spacing:-0.258px;left:583.7px;">Show C1/PIE</div>
<div class="t" style="top:275.84px;letter-spacing:-0.190px;left:583.7px;">Show C2/PIF</div>
<div class="t" style="top:290.94px;letter-spacing:0.044px;left:583.7px;">Show Jitter</div>
<div class="t" style="top:305.74px;letter-spacing:-0.484px;left:583.7px;">Show Read Speed</div>
<div class="t" style="top:320.54px;letter-spacing:-0.358px;left:583.7px;">Show Write Speed</div>
<div class="t" style="top:348.64px;left:568.2px;">品質<span class="k" style="width:27.0px"><span style="transform:scaleX(0.75)">スコア</span></span>:</div>
<div class="t" style="top:348.64px;color:#000080;letter-spacing:-0.670px;right:35.47px;">73</div>
<div class="t" style="top:381.14px;left:568.2px;">進行状況:</div>
<div class="t" style="top:381.14px;color:#000080;letter-spacing:-0.670px;right:34.87px;word-spacing:2px;">100 <span class="k" style="width:7.6px"><span style="transform:scaleX(.72)">%</span></span></div>
<div class="t" style="top:400.64px;left:568.2px;"><span class="k" style="width:45.0px"><span style="transform:scaleX(0.75)">ポジション</span></span>:</div>
<div class="t" style="top:400.64px;color:#000080;letter-spacing:-0.670px;right:35.67px;word-spacing:2px;">4487 MB</div>
<div class="t" style="top:417.84px;left:568.2px;">速度:</div>
<div class="t" style="top:417.84px;color:#000080;letter-spacing:-0.670px;right:35.67px;word-spacing:2px;">8.36 X</div>
<div class="t" style="top:367.64px;letter-spacing:-0.318px;left:40.2px;background:#fff;padding:0 5px 0 14px;margin-left:-14px;">PI Errors</div>
<div class="t" style="top:367.64px;letter-spacing:-0.156px;left:219.7px;background:#fff;padding:0 5px 0 14px;margin-left:-14px;">PI Failures</div>
<div class="t" style="top:367.64px;letter-spacing:0.257px;left:401.2px;background:#fff;padding:0 0 0 14px;margin-left:-14px;">Jitter</div>
<div class="t" style="top:381.84px;left:26.2px;">平均:</div>
<div class="t" style="top:381.84px;color:#000080;letter-spacing:-0.670px;right:567.67px;">283.07</div>
<div class="t" style="top:381.84px;left:208.2px;">平均:</div>
<div class="t" style="top:381.84px;color:#000080;letter-spacing:-0.670px;right:384.97px;">1.53</div>
<div class="t" style="top:381.84px;left:388.2px;">平均:</div>
<div class="t" style="top:381.84px;color:#000080;letter-spacing:-0.670px;right:204.37px;word-spacing:2px;">10.23 <span class="k" style="width:7.6px"><span style="transform:scaleX(.72)">%</span></span></div>
<div class="t" style="top:399.84px;left:26.2px;">最大:</div>
<div class="t" style="top:399.84px;color:#000080;letter-spacing:-0.670px;right:567.67px;">377</div>
<div class="t" style="top:399.84px;left:208.2px;">最大:</div>
<div class="t" style="top:399.84px;color:#000080;letter-spacing:-0.670px;right:384.97px;">22</div>
<div class="t" style="top:399.84px;left:388.2px;">最大:</div>
<div class="t" style="top:399.84px;color:#000080;letter-spacing:-0.670px;right:204.37px;word-spacing:2px;">13.1 <span class="k" style="width:7.6px"><span style="transform:scaleX(.72)">%</span></span></div>
<div class="t" style="top:418.14px;left:26.2px;">合計 :</div>
<div class="t" style="top:418.14px;color:#000080;letter-spacing:-0.670px;right:567.67px;">4686583</div>
<div class="t" style="top:418.14px;left:208.2px;">合計 :</div>
<div class="t" style="top:418.14px;color:#000080;letter-spacing:-0.670px;right:384.97px;">11616</div>
<div class="t" style="top:422.64px;letter-spacing:-0.399px;left:388.7px;">PO Failures:</div>
<div class="t" style="top:422.64px;color:#000080;letter-spacing:-0.670px;right:205.87px;">0</div>
</div>
</body></html>
